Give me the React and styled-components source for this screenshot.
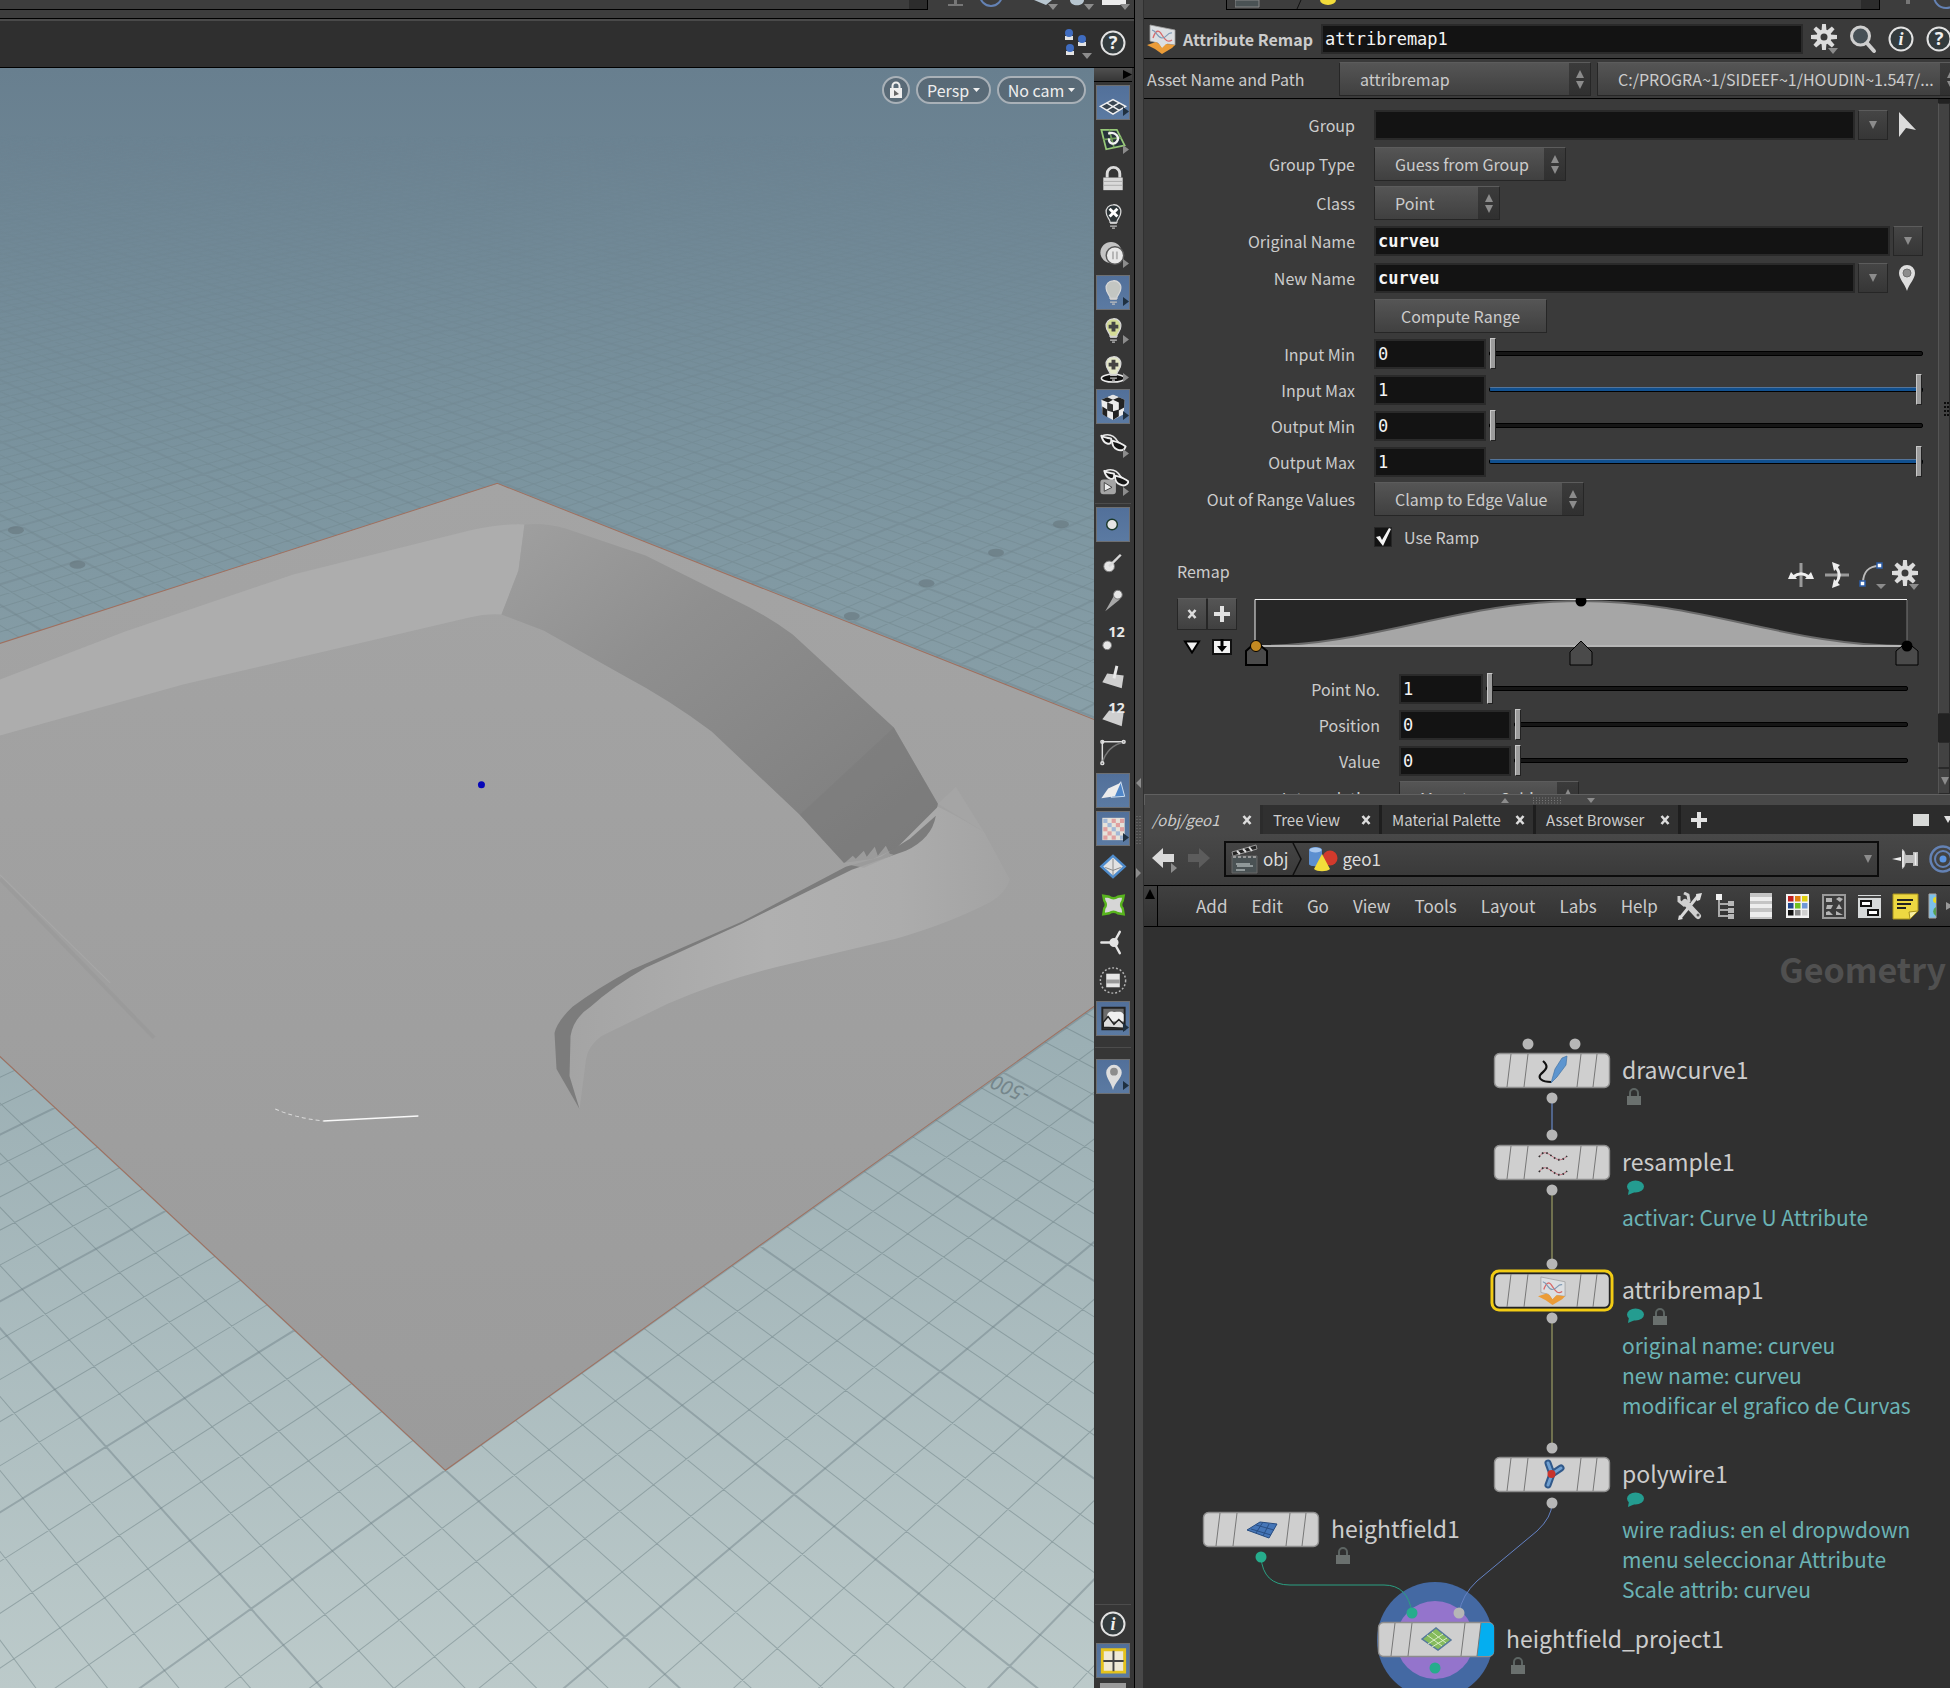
import React from 'react';
import styled, { createGlobalStyle, css } from 'styled-components'

const sans = `"Noto Sans CJK SC", "Noto Sans", sans-serif`;
const mono = `"DejaVu Sans Mono", "Liberation Mono", monospace`;

const GlobalStyle = createGlobalStyle`
  * { box-sizing: border-box; }
  body {
    margin: 0;
    background: #3a3a3a;
    color: #cccccc;
    font-family: ${sans};
    font-size: 16px;
    line-height: 24px;
    overflow: hidden;
  }
  svg { display: block; flex: none; }
  button, input, select { font: inherit; color: inherit; margin: 0; }
`

const raised = css`
  background: linear-gradient(#555555, #404040);
  border: 1px solid #262626;
  border-top-color: #5c5c5c;
`

// ---------- window ----------

const Desktop = styled.div`
  display: grid;
  grid-template-columns: minmax(0, 1134fr) 10px minmax(0, 806fr);
  height: 100vh;
`

const Pane = styled.section`
  display: flex;
  flex-direction: column;
  min-width: 0;
  min-height: 0;
  overflow: hidden;
`

const Strip = styled.div`
  display: flex;
  align-items: flex-start;
  gap: ${props => props.$gap || 0}px;
  flex: none;
  height: 19px;
  padding: 0 0 0 ${props => props.$left || 0}px;
  overflow: hidden;
  background: #3d3d3d;
  border-bottom: 1px solid #000;
`

const StripBox = styled.div`
  display: flex;
  align-items: flex-start;
  gap: 12px;
  flex: 1;
  height: 10px;
  padding-left: 8px;
  overflow: hidden;
  border: 1px solid #000;
  border-top: 0;
  border-left-width: ${props => props.$open ? 0 : 1}px;

  &::after {
    content: '';
    width: 18px;
    height: 9px;
    margin-left: auto;
    background: #2c2c2c;
  }
`

const VSplitter = styled.div`
  display: flex;
  align-items: center;
  justify-content: center;
  background: #484848;
  border-left: 1px solid #000;
  border-right: 1px solid #303030;
`

// ---------- scene view ----------

const SceneBar = styled.div`
  display: flex;
  flex: none;
  align-items: center;
  justify-content: flex-end;
  gap: 8px;
  height: 49px;
  padding: 0 8px 2px 0;
  background: #2f2f2f;
  border-top: 2px solid #4a4a4a;
  border-bottom: 1px solid #000;
`

const SceneBody = styled.div`
  display: flex;
  flex: 1;
  min-height: 0;
`

const Viewport = styled.div`
  position: relative;
  flex: 1;
  min-width: 0;
  overflow: hidden;
`

const Overlay = styled.div`
  position: absolute;
  top: 8px;
  right: 8px;
  display: flex;
  gap: 6px;
`

const Pill = styled.button`
  display: flex;
  align-items: center;
  justify-content: center;
  gap: 4px;
  width: ${props => props.$width}px;
  height: 28px;
  padding: 0;
  color: #eeeeee;
  background: rgba(70, 80, 88, 0.45);
  border: 2px solid #a9b1b8;
  border-radius: 14px;
`

const Tools = styled.nav`
  display: flex;
  flex: none;
  flex-direction: column;
  align-items: center;
  gap: 3px;
  width: 40px;
  padding-right: 2px;
  overflow: hidden;
  background: #363636;
`

const ToolsHandle = styled.div`
  display: flex;
  flex: none;
  justify-content: flex-end;
  align-items: center;
  width: 100%;
  height: 14px;
  background: linear-gradient(#505050, #363636);
  border-bottom: 1px solid #000;
`

const ToolButton = styled.button`
  position: relative;
  flex: none;
  width: 34px;
  height: 35px;
  padding: 0;
  background: ${props => props.$on ? 'linear-gradient(#52709a, #5b7aa2)' : 'none'};
  border: 1px solid ${props => props.$on ? '#6d6f72' : 'transparent'};
`

const Corner = styled.svg`
  position: absolute;
  right: 0;
  bottom: 3px;
`

const ToolRule = styled.hr`
  flex: none;
  width: 36px;
  height: 1px;
  margin: ${props => props.$gap || 0}px 0;
  border: 0;
  background: #4c4c4c;
`

const Spacer = styled.div`
  flex: 1;
`

// ---------- parameters ----------

const Split = styled.div`
  display: grid;
  grid-template-rows: minmax(0, 775fr) minmax(0, 894fr);
  flex: 1;
  min-height: 0;
`

const Header = styled.header`
  display: flex;
  flex: none;
  align-items: center;
  gap: 6px;
  width: calc(100% + ${props => props.$over}px);
  height: 40px;
  padding-left: 3px;
  border-bottom: 1px solid #000;
`

const AssetName = styled.label`
  flex: none;
  width: 186px;
`

const NodeKind = styled.label`
  flex: none;
  width: 132px;
  font-weight: 700;
`

const IconButton = styled.button`
  display: flex;
  flex: none;
  align-items: center;
  justify-content: center;
  width: ${props => props.$width || 32}px;
  height: 32px;
  padding: 0;
  background: none;
  border: 0;
`

const Field = styled.input`
  flex: ${props => props.$width ? 'none' : '1'};
  width: ${props => props.$width ? props.$width + 'px' : 'auto'};
  min-width: 0;
  height: 30px;
  padding: 0 2px;
  color: #f4f4f4;
  background: #131313;
  border: 2px solid #2a2a2a;
  font-family: ${mono};
  font-size: 17px;
  font-weight: ${props => props.$strong ? 700 : 400};
`

const SelectWrap = styled.span`
  position: relative;
  display: flex;
  flex: ${props => props.$width ? 'none' : '1'};
  width: ${props => props.$width ? props.$width + 'px' : 'auto'};
  min-width: 0;
`

const SelectInput = styled.select`
  ${raised}
  width: 100%;
  height: 34px;
  padding: 0 20px 0 20px;
  appearance: none;
  border-radius: 0;
`

const SelectArrows = styled.span`
  position: absolute;
  top: 1px;
  right: 1px;
  bottom: 1px;
  display: flex;
  align-items: center;
  justify-content: center;
  width: 21px;
  background: linear-gradient(#3b3b3b, #303030);
  pointer-events: none;
`

const PushButton = styled.button`
  ${raised}
  width: ${props => props.$width}px;
  height: 34px;
  padding: 0;
`

const DropButton = styled.button`
  ${raised}
  display: flex;
  align-items: center;
  justify-content: center;
  background: linear-gradient(#454545, #363636);
  flex: none;
  width: 30px;
  height: 30px;
  padding: 0;
`

const FormArea = styled.div`
  display: flex;
  flex: 1;
  min-height: 0;
  overflow: hidden;
`

const Form = styled.form`
  display: flex;
  flex: 1;
  flex-direction: column;
  gap: 5px;
  min-width: 0;
  padding: 9px 15px 0 0;
`

const Row = styled.div`
  display: flex;
  flex: none;
  align-items: center;
  gap: 3px;
  height: ${props => props.$height || 31}px;
  padding-right: ${props => props.$right || 0}px;
`

const RowLabel = styled.label`
  flex: none;
  width: ${props => props.$sub ? 236 : 211}px;
  margin-right: 16px;
  text-align: right;
`

const Check = styled.label`
  display: flex;
  align-items: center;
  gap: 12px;
  margin-left: 230px;
`

const CheckBox = styled.input`
  appearance: none;
  width: 18px;
  height: 20px;
  background: #131313;
  border: 1px solid #262626;
`

const CheckMark = styled.svg`
  position: absolute;
`

const Slider = styled.input`
  appearance: none;
  flex: 1;
  min-width: 0;
  height: 31px;
  background: none;

  &::-webkit-slider-runnable-track {
    height: 5px;
    background: ${props => props.$full ? '#11508f' : '#151515'};
    border: 1px solid #000;
    border-top-color: ${props => props.$full ? '#53749a' : '#000'};
    border-radius: 2px;
  }

  &::-webkit-slider-thumb {
    appearance: none;
    width: 6px;
    height: 31px;
    margin-top: -14px;
    background: #9c9c9c;
    border: 1px solid #222;
    border-top-color: #c8c8c8;
    border-left-color: #c8c8c8;
  }
`

const RampHead = styled.div`
  display: flex;
  flex: none;
  align-items: center;
  height: 36px;
  padding-left: 33px;

  h3 {
    flex: 1;
    margin: 0;
    padding-bottom: 8px;
    font-size: 16px;
    font-weight: 400;
  }
`

const RampBody = styled.div`
  display: flex;
  flex: none;
  gap: 8px;
  height: 70px;
  padding: 0 4px 0 33px;
`

const RampKeys = styled.div`
  display: grid;
  flex: none;
  grid-template-columns: 30px 30px;
  grid-template-rows: 32px 34px;

  button {
    display: flex;
    align-items: center;
    justify-content: center;
    padding: 0;
  }
`

const RampKey = styled.button`
  ${raised}
`

const PlainKey = styled.button`
  background: none;
  border: 0;
`

const RampGraph = styled.svg`
  flex: 1;
  min-width: 0;
  height: 70px;
`

const ScrollTrack = styled.div`
  display: flex;
  flex-direction: column;
  flex: none;
  width: 12px;
  padding-top: 4px;
  background: #222;
`

const ScrollThumb = styled.div`
  display: flex;
  flex: ${props => props.$grow || 'none'};
  align-items: center;
  justify-content: flex-end;
  height: 26px;
  margin-bottom: ${props => props.$after || 0}px;
  background: #424242;
  border: 1px solid #2a2a2a;
  border-left-color: #555;
`

// ---------- network ----------

const HSplitter = styled.div`
  display: flex;
  flex: none;
  align-items: center;
  justify-content: center;
  gap: 24px;
  height: 11px;
  background: #484848;
  border: 1px solid #606060;
  border-width: 1px 0 0 1px;
`

const Tabs = styled.div`
  display: flex;
  flex: none;
  height: 29px;
  background: #2c2c2c;
`

const Tab = styled.div`
  display: flex;
  align-items: center;
  justify-content: space-between;
  width: ${props => props.$width}px;
  padding: 0 8px 0 ${props => props.$on ? 8 : 10}px;
  background: ${props => props.$on ? '#484848' : '#303030'};
  border-right: 3px solid ${props => props.$on ? '#2c2c2c' : '#1e1e1e'};
  font-size: 15px;
  font-style: ${props => props.$on ? 'italic' : 'normal'};

  button {
    padding: 0;
    background: none;
    border: 0;
  }
`

const TabEnd = styled.div`
  display: flex;
  flex: 1;
  align-items: center;
  justify-content: space-between;
  padding-left: 9px;
`

const PathRow = styled.div`
  display: flex;
  flex: none;
  align-items: center;
  width: calc(100% + 12px);
  height: 52px;
  padding: 0 0 2px 2px;
  background: linear-gradient(#484848, #3c3c3c);
  border-bottom: 1px solid #000;
`

const PathBox = styled.div`
  display: flex;
  flex: 1;
  align-items: center;
  gap: 3px;
  height: 36px;
  margin: 0 9px 0 10px;
  padding-left: 5px;
  background: linear-gradient(#444, #3a3a3a);
  border: 2px solid #0c0c0c;
  font-size: 17px;

  a {
    display: flex;
    align-items: center;
    gap: 4px;
    color: #dcdcdc;
    text-decoration: none;
  }
`

const MenuBar = styled.div`
  display: flex;
  flex: none;
  align-items: center;
  height: 41px;
  background: linear-gradient(#404040, #323232);
  border-bottom: 1px solid #000;
  overflow: hidden;
`

const MenuGrip = styled.div`
  flex: none;
  align-self: stretch;
  width: 14px;
  padding-top: 3px;
  border-right: 1px solid #000;
`

const Menu = styled.div`
  display: flex;
  flex: none;
  gap: 24px;
  margin: 0 18px 0 38px;
  font-size: 17px;

  button {
    padding: 0;
    background: none;
    border: 0;
  }
`

const MenuIcons = styled.div`
  display: flex;
  gap: 8px;

  button {
    padding: 0;
    background: none;
    border: 0;
  }
`

const Canvas = styled.div`
  position: relative;
  flex: 1;
  min-height: 0;
  overflow: hidden;
  background: #303030;
`

const Wires = styled.svg`
  position: absolute;
  top: 0;
  left: 0;
`

const Watermark = styled.div`
  position: absolute;
  top: 20px;
  right: 4px;
  color: #505050;
  font-size: 34px;
  font-weight: 700;
  line-height: 44px;
`

const NodeBox = styled.div`
  position: absolute;
  top: ${props => props.$y}px;
  left: ${props => props.$x}px;
  display: flex;
  gap: 12px;
`

const NodeTile = styled.svg`
  overflow: visible;
`

const NodeText = styled.div`
  color: #cccccc;
  font-size: 23px;
  line-height: 32px;
  white-space: nowrap;
`

const Badges = styled.div`
  display: flex;
  gap: 8px;
  height: 25px;
  padding: 3px 0 0 4px;
`

const Note = styled.p`
  margin: 0;
  color: #6bb3b5;
  font-size: 21px;
  line-height: 30px;
  white-space: pre-line;
`

// ---------- small glyphs ----------

const Down = ({ size = 8, fill = '#8c8c8c' }) => (
  <svg width={size} height={size} viewBox="0 0 8 8"><path d="M0 0h8L4 8z" fill={fill} /></svg>
)

const Caret = () => (
  <svg width="7" height="4" viewBox="0 0 7 4"><path d="M0 0h7L3.500 4z" fill="#f0f0f0" /></svg>
)

const Updown = () => (
  <svg width="8" height="20" viewBox="0 0 8 20" fill="#8c8c8c"><path d="M4 1l4 8H0zM0 12h8l-4 8z" /></svg>
)

const Cross = () => (
  <svg width="10" height="12" viewBox="0 0 10 12"><path d="M1.500 2l7 8M8.500 2l-7 8" stroke="#dcdcdc" strokeWidth="2.600" /></svg>
)

const Plus = () => (
  <svg width="18" height="18" viewBox="0 0 18 18"><path d="M9 1v16M1 9h16" stroke="#e2e2e2" strokeWidth="4" /></svg>
)

const teeth = [0, 45, 90, 135, 180, 225, 270, 315];

const Gear = () => (
  <svg width="30" height="32" viewBox="0 0 30 32">
    <g fill="#dcdcdc">
      {teeth.map(a => <path key={a} d="M11.500 8l.6-7h3.800l.6 7z" transform={`rotate(${a} 14 14)`} />)}
    </g>
    <circle cx="14" cy="14" r="5.500" fill="none" stroke="#dcdcdc" strokeWidth="4" />
    <path d="M18 25h10l-5 6z" fill="#8c8c8c" />
  </svg>
)

const Search = () => (
  <svg width="30" height="30" viewBox="0 0 30 30">
    <path d="M18 18l8 9" stroke="#cfcfcf" strokeWidth="4" strokeLinecap="round" />
    <circle cx="12.500" cy="12" r="9" fill="#465056" stroke="#cfcfcf" strokeWidth="3" />
  </svg>
)

const Ring = ({ children, serif }) => (
  <svg width="28" height="28" viewBox="0 0 28 28">
    <circle cx="14" cy="14" r="11.500" fill="#333b3d" stroke="#e2e2e2" strokeWidth="2" />
    <text x="14" y="20" textAnchor="middle" fill="#f0f0f0" fontSize="18" fontWeight="700"
      fontStyle={serif ? 'italic' : 'normal'}
      fontFamily={serif ? '"Liberation Serif", serif' : '"Noto Sans", sans-serif'}>{children}</text>
  </svg>
)

const Target = () => (
  <svg width="28" height="28" viewBox="0 0 28 28" fill="none" stroke="#6482b4">
    <circle cx="14" cy="14" r="12.500" strokeWidth="2.500" />
    <circle cx="14" cy="14" r="8" strokeWidth="2" />
    <circle cx="14" cy="14" r="3.500" fill="#5b94e0" stroke="none" />
  </svg>
)

const Pin = () => (
  <svg width="30" height="22" viewBox="0 0 30 22">
    <path d="M1 11l9-2v4z" fill="#f0f0f0" />
    <path d="M11 1c4 2 3 6 4 6h7V4h5v14h-5v-3h-7c-1 0 0 4-4 6z" fill="#bdbdbd" />
    <path d="M12 3v16M24.500 5v12" stroke="#eee" strokeWidth="1.500" />
  </svg>
)

const Marker = () => (
  <svg width="20" height="28" viewBox="0 0 20 28">
    <path d="M10 27C8 20 2 15 2 9a8 8 0 0 1 16 0c0 6-6 11-8 18z" fill="#dedede" />
    <circle cx="10" cy="9" r="4" fill="#8d8d8d" stroke="#707070" />
  </svg>
)

const Pointer = () => (
  <svg width="20" height="28" viewBox="0 0 20 28"><path d="M2 1l17 18-10-2-7 9z" fill="#dcdcdc" /></svg>
)

const RemapIcon = ({ size = 30 }) => (
  <svg width={size} height={size} viewBox="0 0 30 30">
    <path d="M3 1l25 5v15l-8-1-5 5-4-6-8-2z" fill="#dcdfe2" stroke="#a0a0a0" strokeWidth="0.800" />
    <path d="M6 14c3-9 6-8 9-3s6 8 10 5" fill="none" stroke="#d86a6a" strokeWidth="1.300" />
    <path d="M5 6c5 1 5 8 10 8s5-6 10-5" fill="none" stroke="#7f9ab4" strokeWidth="1.100" />
    <path d="M0 21l9-3 3 2 3 4 4-4 9 1-3 3-10 6-7-5z" fill="#eb9c38" />
  </svg>
)

const Clapper = () => (
  <svg width="28" height="30" viewBox="0 0 28 30">
    <path d="M1 8l24-7 1 4L2 12z" fill="#222" stroke="#999" />
    <path d="M6 7l3 3M12 5l3 3M18 3l3 4" stroke="#ddd" strokeWidth="2" />
    <path d="M1 12h25v17H1z" fill="#4a5254" stroke="#666" />
    <path d="M2 13h24" stroke="#999" strokeDasharray="3 2" strokeWidth="2" />
    <path d="M5 20h14M6 22h16M5 26h9" stroke="#a8b0b0" strokeWidth="1.300" />
  </svg>
)

const GeoIcon = () => (
  <svg width="30" height="26" viewBox="0 0 30 26">
    <path d="M1 4c0-4 13-4 13 0v14c0 3-13 3-13 0z" fill="#5c8fd0" />
    <ellipse cx="7.500" cy="4" rx="6" ry="2.500" fill="#a9c8ee" />
    <circle cx="22" cy="12" r="7.500" fill="#d23a2c" />
    <path d="M14 8l8 15c-3 3-13 3-16 0z" fill="#f2dc3a" />
  </svg>
)

const Arrow = ({ dim, flip }) => (
  <svg width="28" height="28" viewBox="0 0 28 28">
    <g transform={flip ? 'translate(28 0) scale(-1 1)' : undefined}>
      <path d="M2 13L13 3v6h11v8H13v6z" fill={dim ? '#5c5c5c' : '#dadada'} />
    </g>
    {!dim && <path d="M21 18l6 5-6 5z" fill="#8c8c8c" />}
  </svg>
)

const Lock = () => (
  <svg width="16" height="18" viewBox="0 0 16 18">
    <path d="M4 9V5a4 4 0 0 1 8 0v4" fill="none" stroke="#5d6563" strokeWidth="2" />
    <path d="M1 8h14v9H1z" fill="#6a706e" />
  </svg>
)

const Comment = () => (
  <svg width="18" height="16" viewBox="0 0 18 16">
    <ellipse cx="9.500" cy="6.500" rx="8.500" ry="6" fill="#249c90" />
    <path d="M3 9l-1 6 7-3z" fill="#249c90" />
  </svg>
)

// ---------- viewport tool column ----------

const bulb = (fill, inner) => (
  <>
    <path d="M16 5a7 7 0 0 1 8 8c0 5-4 6-4 10h-7c0-4-4-5-4-10a7 7 0 0 1 7-8z" fill={fill} stroke="#d8d8d8" strokeWidth="1.300" />
    <path d="M13 24h7M13 27h7M15 29h3" stroke="#c0c0c0" strokeWidth="1.300" />
    {inner}
  </>
)

const shades = (
  <g strokeLinejoin="round">
    <path d="M5 8c8-3 13 1 16 6l8 6" fill="none" stroke="#e8e8e8" strokeWidth="1.600" />
    <path d="M4 8c3 2 6 2 10 3 1 4-1 6-4 5-4-1-5-4-6-8z" fill="#151515" stroke="#eee" strokeWidth="2" />
    <path d="M15 13c4 1 9 2 14 6-1 4-5 5-9 3-3-1-5-5-5-9z" fill="#151515" stroke="#eee" strokeWidth="2" />
  </g>
)

const ball = (x, y, r) => <circle cx={x} cy={y} r={r} fill="#e6e6e6" stroke="#777" strokeWidth="1" />

const number = (
  <text x="11" y="15" fill="#e8e8e8" fontSize="15" fontWeight="700" fontFamily='"Noto Sans", sans-serif'>12</text>
)

const checks = [0, 1, 2, 3, 4].flatMap(r => [0, 1, 2, 3, 4].map(c => [r, c]));

const toolsTop = [
  { name: 'Reference plane', on: true, more: true, art: (
    <g fill="#3a4651" stroke="#f0f0f0" strokeWidth="1.500"><path d="M3 21l13-7 13 7-13 8z" /><path d="M9.500 25l13-7.500M9.500 17.500l13 7.500" /></g>
  ) },
  { name: 'Construction plane', more: true, art: (
    <g fill="none" strokeWidth="1.800"><path d="M4 6h16l8 16-19 4z" stroke="#97c978" fill="#26313a" /><path d="M6 16l19-2M12 6l5 18" stroke="#6f9c58" /><path d="M11 10c8-3 12 4 9 8s-9 2-8-3" stroke="#f2f2f2" strokeWidth="2.400" /></g>
  ) },
  { name: 'Lock camera', art: (
    <g><path d="M10 16v-4a6.500 6.500 0 0 1 13 0v4" fill="none" stroke="#dcdcdc" strokeWidth="3" /><path d="M6 16h20v13H6z" fill="#dadada" /><path d="M6 20h20M6 24h20" stroke="#aaa" /></g>
  ) },
  { name: 'No lighting', art: bulb('#2d3538', <path d="M12.500 9l8 8M20.500 9l-8 8" stroke="#fff" strokeWidth="3" />) },
  { name: 'Headlight', more: true, art: (
    <g><circle cx="14" cy="15" r="11" fill="#c4c4c4" /><circle cx="18" cy="18" r="9" fill="#e8e8e8" stroke="#555" strokeWidth="1.500" /><path d="M16 14v8M20 14v8" stroke="#b4b4b4" strokeWidth="2" /></g>
  ) },
  { name: 'Normal lighting', on: true, more: true, art: bulb('#c3c6c2') },
  { name: 'High quality lighting', more: true, art: bulb('#d4dc96', <path d="M16.500 8v10M11.500 13h10" stroke="#444" strokeWidth="4" />) },
  { name: 'Lighting and shadows', more: true, art: (
    <g><ellipse cx="16" cy="27" rx="12" ry="4" fill="#111" stroke="#eee" strokeWidth="1.500" />{bulb('#e4e8c8', <path d="M16.500 8v10M11.500 13h10" stroke="#444" strokeWidth="4" />)}</g>
  ) },
  { name: 'Materials', on: true, more: true, art: (
    <g>
      <path d="M4 10l12-5 12 5-1 15-11 6-11-6z" fill="#ececec" />
      <path d="M10 7.500l6-2.500 6 2.500-6 2.500z" fill="#e4e4e4" />
      <path d="M4 10l6-2.500 6 2.500-5 3zM16 10l6-2.500 6 2.500-6 3zM22 13l6-3-.5 8-5.500 3zM16 22l6-2v7l-6 4zM5 17l5 3v8l-5-3z" fill="#222" />
      <path d="M10 13l6 2v8l-6-2z" fill="#333" />
    </g>
  ) },
  { name: 'Display options', more: true, art: shades },
  { name: 'Render flipbook', more: true, art: (
    <g><rect x="3" y="14" width="16" height="15" rx="3" fill="#a5a5a5" /><path d="M7 17l8 5-8 4z" fill="#eee" stroke="#444" /><g transform="translate(3 -3)">{shades}</g></g>
  ) },
]

const toolsMid = [
  { name: 'Points', on: true, art: <circle cx="15" cy="17" r="5.500" fill="#e6e6e6" stroke="#1c3a2c" strokeWidth="1.500" /> },
  { name: 'Point normals', art: <g>{ball(12, 21, 5.5)}<path d="M12 21L24 9" stroke="#d8d8d8" strokeWidth="2.500" /></g> },
  { name: 'Point trails', art: <g><path d="M8 28l9-16 6 4z" fill="#a8a8a8" />{ball(21, 11, 4.5)}</g> },
  { name: 'Point numbers', art: <g>{number}{ball(10, 24, 4.5)}</g> },
  { name: 'Primitive normals', art: <g><path d="M5 23l5-9 17 2-2 13z" fill="#cfcfcf" /><path d="M17 19l3-13" stroke="#e8e8e8" strokeWidth="3" /></g> },
  { name: 'Primitive numbers', art: <g><path d="M5 22l7-9 15 2-2 14z" fill="#cfcfcf" />{number}</g> },
  { name: 'Hulls', art: <g fill="none" stroke="#dcdcdc" strokeWidth="1.500"><path d="M5 28V6h23" /><path d="M5 28C8 17 15 9 28 6" stroke="#777" /><circle cx="5" cy="6" r="1.500" /><circle cx="5" cy="28" r="1.500" /><circle cx="27" cy="6" r="1.500" /></g> },
  { name: 'Shaded faces', on: true, art: <g><path d="M14 24l10-16 4 15z" fill="#4f86c8" stroke="#cfe0f2" /><path d="M4 25l7-10 13-6-6 14z" fill="#ececec" /></g> },
  { name: 'UV texture', on: true, more: true, art: (
    <g><path d="M5 6h23v23H5z" fill="#e6e2da" />{checks.map(([r, c]) => (r + c) % 2 === 0 &&
      <rect key={`${r}${c}`} x={6 + c * 4.3} y={7 + r * 4.3} width="4.300" height="4.300" fill={(r * 2 + c) % 3 ? '#e0a0a0' : '#a3b8d6'} />)}</g>
  ) },
  { name: 'Vertex markers', art: <g><path d="M4 17L16 6l12 11-12 11z" fill="#e2e2e2" stroke="#4f8ccc" strokeWidth="2.500" /><path d="M8 18l8 3 8-3M16 9v17" fill="none" stroke="#888" /></g> },
  { name: 'Profile curves', art: <path d="M6 8l6 1c3 2 6 2 9 0l6-1-1 5c-2 3-2 6 0 8l1 6-6-1c-3-2-6-2-9 0l-6 1 1-6c2-2 2-5 0-8z" fill="#d6d6d6" stroke="#58b41e" strokeWidth="2.500" /> },
  { name: 'Breakpoints', art: <g stroke="#e4e4e4" strokeWidth="2.500" strokeLinecap="round"><path d="M17 17L23 6M17 17l6 11M17 17H4" /><circle cx="17" cy="17" r="3.500" fill="#e4e4e4" /></g> },
  { name: 'Group list', art: <g><circle cx="16" cy="17" r="13" fill="none" stroke="#b4b4b4" strokeDasharray="2 2" strokeWidth="1.500" /><path d="M9 10h14v14H9z" fill="#e6e6e6" /><path d="M9 16h14v4H9z" fill="#999" /></g> },
  { name: 'Background image', on: true, more: true, art: <g><path d="M5 6h23v22H5z" fill="#6c6c6c" stroke="#222" strokeWidth="2" /><path d="M10 14c0-3 3-5 6-4s9-2 11 3v7H14z" fill="#f0f0f0" /><path d="M6 26v-5l5-6 6 8 5-5 5 5v4z" fill="#ddd" stroke="#222" strokeWidth="1.500" /></g> },
]

const toolsLow = [
  { name: 'Markers', on: true, more: true, art: <g><path d="M16 31C14 23 9 19 9 13a8 8 0 0 1 16 0c0 6-7 10-9 18z" fill="#dedede" /><circle cx="17" cy="12" r="4" fill="#8d8d8d" /></g> },
]

function Tool({ tool }) {
  return (
    <ToolButton type="button" aria-label={tool.name} $on={tool.on}>
      <svg width="32" height="33" viewBox="0 0 32 34">{tool.art}</svg>
      {tool.more && (
        <Corner width="6" height="9" viewBox="0 0 6 9"><path d="M0 0l6 4.500L0 9z" fill={tool.on ? '#1f3040' : '#8c8c8c'} /></Corner>
      )}
    </ToolButton>
  )
}

// ---------- viewport scene ----------

// ground plane point for grid coordinates (u, v), one unit is one side of the slab
function groundPoint(u, v) {
  const w = 1 + u * 0.583 + v * 0.692;
  const x = 445 + u * 0.583 * 2915 - v * 0.692 * 1447;
  const y = 1469 - u * 0.583 * 292 - v * 0.692 * 290;
  return [x / w, y / w];
}

const at = (u, v) => groundPoint(u, v).map(n => n.toFixed(1)).join(' ');

function gridPath(bold) {
  const parts = [];
  for (let i = -60; i < 280; i++) {
    if ((i % 5 === 0) !== bold) continue;
    const t = i / 40;
    const startU = (-0.75 - t * 0.692) / 0.583;
    const startV = (-0.75 - t * 0.583) / 0.692;
    parts.push(`M${at(startU, t)}L${at(12, t)}`);
    parts.push(`M${at(t, startV)}L${at(t, 12)}`);
  }
  return parts.join('');
}

const thinGrid = gridPath(false);
const boldGrid = gridPath(true);

// ruler ticks that run away from the slab along both axes
const ticks = [
  [1.01, 0.509], [1.135, 0.509], [1.26, 0.509], [1.385, 0.509], [0.49, 1.117], [0.49, 1.242],
].map(([u, v]) => groundPoint(u, v));

function Scene() {
  return (
    <svg width="100%" height="100%" viewBox="0 68 1093 1620" preserveAspectRatio="xMidYMin slice" role="img" aria-label="Scene">
      <defs>
        <linearGradient id="sky" x1="0" y1="0" x2="0" y2="1">
          <stop offset="0" stopColor="#687f8f" />
          <stop offset="0.25" stopColor="#7b949f" />
          <stop offset="0.6" stopColor="#9bafb4" />
          <stop offset="1" stopColor="#bccaca" />
        </linearGradient>
        <linearGradient id="fade" x1="0" y1="0" x2="0" y2="1">
          <stop offset="0.040" stopColor="#000" />
          <stop offset="0.200" stopColor="#666" />
          <stop offset="0.500" stopColor="#fff" />
        </linearGradient>
        <linearGradient id="wall" x1="0" y1="0" x2="1" y2="1">
          <stop offset="0" stopColor="#a0a0a0" />
          <stop offset="0.350" stopColor="#8f8f8f" />
          <stop offset="1" stopColor="#7b7b7b" />
        </linearGradient>
        <linearGradient id="bank" x1="0" y1="0" x2="1" y2="0">
          <stop offset="0" stopColor="#a4a4a4" />
          <stop offset="0.450" stopColor="#b0b0b0" />
          <stop offset="0.750" stopColor="#acacac" />
          <stop offset="1" stopColor="#a3a3a3" />
        </linearGradient>
        <linearGradient id="slab" x1="0" y1="0" x2="0" y2="1">
          <stop offset="0" stopColor="#a4a4a4" />
          <stop offset="1" stopColor="#9b9b9b" />
        </linearGradient>
        <mask id="haze" maskUnits="userSpaceOnUse" x="0" y="68" width="1093" height="1620">
          <rect y="68" width="1093" height="1620" fill="url(#fade)" />
        </mask>
      </defs>
      <rect y="68" width="1093" height="1620" fill="url(#sky)" />
      <g mask="url(#haze)" fill="none" stroke="#66797f">
        <path d={thinGrid} strokeWidth="1" opacity="0.450" />
        <path d={boldGrid} strokeWidth="2" opacity="0.400" />
      </g>
      <g fill="#66767d" opacity="0.600">
        {ticks.map(([x, y]) => <ellipse key={x} cx={x} cy={y} rx="8" ry="4" />)}
      </g>
      <text transform="translate(1030 1090) rotate(205)" fill="#75868b" fontSize="20" fontStyle="italic" fontFamily="Noto Sans, sans-serif">-500</text>
      <path d="M497 483L1351 821 445 1469-330 749z" fill="url(#slab)" stroke="#a0705f" strokeWidth="1" />
      <path d="M0 679L125 631 293 574 469 530Q500 523 524 524L518 570 501 614Q485 613 469 617L183 684 0 735z" fill="#adadad" />
      <path d="M524 524Q545 522 565 528L645 555 733 599Q765 614 792 634L893 727 937 803 933 821 909 841 873 858 843 862 799 814 711 731Q670 700 623 675L543 630 501 614 518 570z" fill="url(#wall)" />
      <path d="M893 727L937 803 933 821 909 841 873 858 843 862 799 814z" fill="#777" opacity="0.350" />
      <path d="M937 806Q950 812 983 831L1009 879Q1004 893 990 901 950 922 895 938L777 966Q720 980 667 1003L601 1035Q586 1046 585 1062L579 1108 567 1075 568 1035Q573 1017 587 1008 612 984 645 965L741 923 851 868 895 848z" fill="url(#bank)" />
      <path d="M937 803L955 786 983 831z" fill="#a5a5a5" />
      <path d="M935 815Q931 838 905 850L851 869 741 923 645 967Q612 986 590 1006 573 1017 570 1035L569 1075 579 1108 556 1068 554 1032Q557 1020 572 1006 596 988 631 969L741 921 845 866 880 856 909 838z" fill="#7c7c7c" />
      <path d="M843 863l9-8 3 3 8-8 3 6 8-10 3 9 8-10 4 8 4 1-30 13z" fill="#a2a2a2" opacity="0.800" />
      <path d="M0 878L154 1037" stroke="#939393" strokeWidth="4" opacity="0.350" />
      <path d="M0 874L110 982" stroke="#b0b0b0" opacity="0.500" />
      <path d="M275 1108Q295 1117 323 1120" fill="none" stroke="#f4f4f4" strokeDasharray="4 3" opacity="0.700" />
      <path d="M323 1120L418 1115" stroke="#f8f8f8" strokeWidth="1.400" />
      <circle cx="481" cy="784" r="3.500" fill="#0606b8" />
    </svg>
  )
}

function SceneView() {
  return (
    <Pane>
      <Strip $gap={16}>
        <StripBox $open />
        <svg width="190" height="10" viewBox="0 0 190 10">
          <path d="M10 0h3v4h6v2H4V4h6z" fill="#777" />
          <circle cx="47" cy="-5" r="11" fill="none" stroke="#6482b4" strokeWidth="2" />
          <path d="M90 0l12 5 6-5zM126 0c0 7 14 7 14 0z" fill="#b8c6d0" />
          <path d="M158 0h24v5h-24z" fill="#ececec" />
          <path d="M104 4h10l-5 6zM140 4h10l-5 6zM176 4h10l-5 6z" fill="#8c8c8c" />
        </svg>
      </Strip>
      <SceneBar>
        <IconButton type="button" aria-label="Options" $width={30}>
          <svg width="30" height="32" viewBox="0 0 30 32">
            {[[7, 6], [20, 12], [8, 21]].map(([x, y]) => (
              <g key={x}><path d={`M${x - 4} ${y + 3}h8v4h-8z`} fill="#e4e4e4" /><circle cx={x} cy={y} r="4" fill="#3f6cc0" /></g>
            ))}
            <path d="M20 26h10l-5 6z" fill="#8c8c8c" />
          </svg>
        </IconButton>
        <IconButton type="button" aria-label="Help" $width={26}><Ring>?</Ring></IconButton>
      </SceneBar>
      <SceneBody>
        <Viewport>
          <Scene />
          <Overlay>
            <Pill type="button" aria-label="Lock" $width={28}>
              <svg width="14" height="18" viewBox="0 0 14 18"><path d="M3.500 8V5a3.500 3.500 0 0 1 7 0v3" fill="none" stroke="#eee" strokeWidth="2" /><path d="M1 7h12v10H1z" fill="#eee" /><path d="M5 9l5 4-5 2z" fill="#666" /></svg>
            </Pill>
            <Pill type="button" $width={75}>Persp <Caret /></Pill>
            <Pill type="button" $width={89}>No cam <Caret /></Pill>
          </Overlay>
        </Viewport>
        <Tools>
          <ToolsHandle><svg width="9" height="9" viewBox="0 0 9 9"><path d="M0 0l9 4.500L0 9z" /></svg></ToolsHandle>
          {toolsTop.map(tool => <Tool key={tool.name} tool={tool} />)}
          <ToolRule />
          {toolsMid.map(tool => <Tool key={tool.name} tool={tool} />)}
          <ToolRule $gap={8} />
          {toolsLow.map(tool => <Tool key={tool.name} tool={tool} />)}
          <Spacer />
          <ToolRule />
          <IconButton type="button" aria-label="Info" $width={34}><Ring serif>i</Ring></IconButton>
          <Tool tool={{ name: 'Layout', on: true, art: <g><path d="M5 6h23v23H5z" fill="#efe9d6" stroke="#e4c21c" strokeWidth="3" /><path d="M16.500 7v21M6 17.500h21" stroke="#444" strokeWidth="2" /></g> }} />
          <svg width="26" height="7"><rect width="26" height="7" y="2" fill="#9a9a9a" /></svg>
        </Tools>
      </SceneBody>
    </Pane>
  )
}

// ---------- parameter form ----------

function Select({ id, label, value, width }) {
  return (
    <SelectWrap $width={width}>
      <SelectInput id={id} aria-label={label} defaultValue={value}>
        <option>{value}</option>
      </SelectInput>
      <SelectArrows><Updown /></SelectArrows>
    </SelectWrap>
  )
}

function SliderRow({ id, label, value, full, sub, width = 112, right }) {
  return (
    <Row $right={right}>
      <RowLabel htmlFor={id} $sub={sub}>{label}</RowLabel>
      <Field id={id} $width={width} defaultValue={value} />
      <Slider type="range" aria-label={`${label} slider`} min="0" max="1" step="any" defaultValue={full ? 1 : 0} $full={full} />
    </Row>
  )
}

function Ramp() {
  return (
    <RampGraph viewBox="0 0 674 70" preserveAspectRatio="none" role="img" aria-label="Remap ramp">
      <path d="M10 2h652v46H10z" fill="#262626" />
      <path d="M10 48C130 48 215 3 336 3S542 48 662 48z" fill="#a6a6a6" stroke="#6a6a6a" strokeWidth="2" />
      <path d="M10 48h652" stroke="#b5b5b5" strokeWidth="2" />
      <path d="M10 48V1.500h652" fill="none" stroke="#f0f0f0" />
      <path d="M662 2v46" stroke="#777" />
      <g fill="#4a4a4a" stroke="#000">
        <path d="M1 67V53l10-9 11 9v14z" strokeWidth="2" />
        <path d="M325 67V54l11-11 11 11v13z" />
        <path d="M651 67V53l11-9 11 9v14z" />
      </g>
      <circle cx="11" cy="48" r="5.500" fill="#c48a22" stroke="#000" />
      <circle cx="336" cy="3" r="5.500" />
      <circle cx="662" cy="48" r="5.500" />
    </RampGraph>
  )
}

function Parameters() {
  return (
    <Pane>
      <Header $over={5}>
        <RemapIcon />
        <NodeKind htmlFor="name">Attribute Remap</NodeKind>
        <Field id="name" defaultValue="attribremap1" />
        <IconButton type="button" aria-label="Actions"><Gear /></IconButton>
        <IconButton type="button" aria-label="Find"><Search /></IconButton>
        <IconButton type="button" aria-label="Info"><Ring serif>i</Ring></IconButton>
        <IconButton type="button" aria-label="Help"><Ring>?</Ring></IconButton>
      </Header>
      <Header $over={12}>
        <AssetName htmlFor="asset">Asset Name and Path</AssetName>
        <Select id="asset" value="attribremap" width={252} />
        <Select label="Asset path" value="C:/PROGRA~1/SIDEEF~1/HOUDIN~1.547/..." />
      </Header>
      <FormArea>
        <Form>
          <Row $height={34}>
            <RowLabel htmlFor="group">Group</RowLabel>
            <Field id="group" />
            <DropButton type="button" aria-label="Group list"><Down /></DropButton>
            <IconButton type="button" aria-label="Select group"><Pointer /></IconButton>
          </Row>
          <Row $height={34}>
            <RowLabel htmlFor="type">Group Type</RowLabel>
            <Select id="type" value="Guess from Group" width={192} />
          </Row>
          <Row $height={34}>
            <RowLabel htmlFor="class">Class</RowLabel>
            <Select id="class" value="Point" width={126} />
          </Row>
          <Row $height={32}>
            <RowLabel htmlFor="original">Original Name</RowLabel>
            <Field id="original" defaultValue="curveu" $strong />
            <DropButton type="button" aria-label="Original name list"><Down /></DropButton>
          </Row>
          <Row $height={32}>
            <RowLabel htmlFor="new">New Name</RowLabel>
            <Field id="new" defaultValue="curveu" $strong />
            <DropButton type="button" aria-label="New name list"><Down /></DropButton>
            <IconButton type="button" aria-label="Visualize"><Marker /></IconButton>
          </Row>
          <Row $height={34}>
            <RowLabel as="span" />
            <PushButton type="button" $width={173}>Compute Range</PushButton>
          </Row>
          <SliderRow id="imin" label="Input Min" value="0" />
          <SliderRow id="imax" label="Input Max" value="1" full />
          <SliderRow id="omin" label="Output Min" value="0" />
          <SliderRow id="omax" label="Output Max" value="1" full />
          <Row $height={34}>
            <RowLabel htmlFor="range">Out of Range Values</RowLabel>
            <Select id="range" value="Clamp to Edge Value" width={210} />
          </Row>
          <Row>
            <Check>
              <CheckBox type="checkbox" defaultChecked />
              <CheckMark width="18" height="22" viewBox="0 0 18 22"><path d="M2 11l4-1 2 4 7-12 2 1-8 17z" fill="#f4f4f4" /></CheckMark>
              Use Ramp
            </Check>
          </Row>
          <RampHead>
            <h3>Remap</h3>
            <IconButton type="button" aria-label="Flip horizontal" $width={36}>
              <svg width="26" height="26" viewBox="0 0 26 26"><path d="M13 1v24" stroke="#9a9a9a" strokeWidth="3" /><path d="M5 15c5-4 11-4 16 0" fill="none" stroke="#eee" strokeWidth="3" /><path d="M0 17l3-7 6 7zM26 17l-3-7-6 7z" fill="#eee" /></svg>
            </IconButton>
            <IconButton type="button" aria-label="Flip vertical" $width={36}>
              <svg width="26" height="26" viewBox="0 0 26 26"><path d="M1 13h24" stroke="#9a9a9a" strokeWidth="3" /><path d="M12 5c4 5 4 11 0 16" fill="none" stroke="#eee" strokeWidth="3" /><path d="M8 0l8 3-6 6zM8 26l8-3-6-6z" fill="#eee" /></svg>
            </IconButton>
            <IconButton type="button" aria-label="Presets" $width={34}>
              <svg width="28" height="28" viewBox="0 0 28 28"><path d="M5 22C5 11 11 5 21 5" fill="none" stroke="#bbb" strokeWidth="2" /><path d="M2 20h5v5H2zM19 2h5v5h-5z" fill="#fff" stroke="#2c5ea8" strokeWidth="1.500" /><path d="M18 23h10l-5 5z" fill="#8c8c8c" /></svg>
            </IconButton>
            <IconButton type="button" aria-label="Ramp actions" $width={34}><Gear /></IconButton>
          </RampHead>
          <RampBody>
            <RampKeys>
              <RampKey type="button" aria-label="Delete point"><Cross /></RampKey>
              <RampKey type="button" aria-label="Add point"><Plus /></RampKey>
              <PlainKey type="button" aria-label="Show controls"><svg width="18" height="14" viewBox="0 0 18 14"><path d="M2 1.500h14l-7 11z" fill="#f2f2f2" stroke="#000" strokeWidth="2" /></svg></PlainKey>
              <PlainKey type="button" aria-label="Expand"><svg width="20" height="18" viewBox="0 0 20 18"><path d="M1 2h18v14H1z" fill="#f2f2f2" stroke="#111" strokeWidth="2" /><path d="M8.500 1h3v7h3.500l-5 6-5-6h3.500z" /></svg></PlainKey>
            </RampKeys>
            <Ramp />
          </RampBody>
          <SliderRow id="point" label="Point No." value="1" sub width={84} right={15} />
          <SliderRow id="pos" label="Position" value="0" sub right={15} />
          <SliderRow id="val" label="Value" value="0" sub right={15} />
          <Row $height={34}>
            <RowLabel htmlFor="interp" $sub>Interpolation</RowLabel>
            <Select id="interp" value="Monotone Cubic" width={180} />
          </Row>
        </Form>
        <ScrollTrack>
          <ScrollThumb $grow={1} $after={28}>
            <svg width="5" height="14" viewBox="0 0 5 14"><path d="M1 0v14M4 0v14" stroke="#0c0c0c" strokeWidth="2" strokeDasharray="2 2" /></svg>
          </ScrollThumb>
          <ScrollThumb />
          <ScrollThumb><Down /></ScrollThumb>
        </ScrollTrack>
      </FormArea>
    </Pane>
  )
}

// ---------- network editor ----------

const tileArt = {
  pen: (
    <g><path d="M49 8c7 6 2 9-2 13s1 8 10 8" fill="none" stroke="#111" strokeWidth="2.200" /><path d="M57 30l4-14 7-11 5-2-1 9-9 12z" fill="#5d95cf" stroke="#386a9c" strokeWidth="0.600" /></g>
  ),
  waves: (
    <g fill="none"><path d="M45 12c9-14 16 12 28-1M45 27c9-14 16 12 28-1" stroke="#c87484" strokeWidth="1" /><path d="M45 12c9-14 16 12 28-1M45 27c9-14 16 12 28-1" stroke="#333" strokeDasharray="1.500 3" strokeWidth="1.800" /></g>
  ),
  remap: <g transform="translate(44 3)"><RemapIcon size={29} /></g>,
  joint: (
    <g strokeLinecap="round"><path d="M54 6l4 11M67 11l-9 6M58 17l-4 11" stroke="#31598a" strokeWidth="7" /><path d="M54 6l4 11M67 11l-9 6M58 17l-4 11" stroke="#6f9fd0" strokeWidth="3" /><circle cx="57.500" cy="17" r="4" fill="#c8342c" /></g>
  ),
  field: (
    <g><path d="M44 18l13-8 17 2-8 14z" fill="#4576b8" stroke="#274c80" /><path d="M48 17l20 6M53 13l18 5M60 10l-7 11M66 12l-6 12" stroke="#274c80" strokeWidth="0.900" /></g>
  ),
  projected: (
    <g><path d="M44 17l14-11 15 12-13 10z" fill="#85bb5c" stroke="#56799c" strokeWidth="1.500" /><path d="M49 13l15 11M54 10l14 11M50 22l15-10M54 25l15-9" stroke="#d8ecc4" strokeWidth="1" /></g>
  ),
}

const nodes = [
  { name: 'drawcurve1', x: 350, y: 126, art: 'pen', lock: true },
  { name: 'resample1', x: 350, y: 218, art: 'waves', note: 'activar: Curve U Attribute' },
  { name: 'attribremap1', x: 350, y: 346, art: 'remap', selected: true, lock: true, note: 'original name: curveu\nnew name: curveu\nmodificar el grafico de Curvas' },
  { name: 'polywire1', x: 350, y: 530, art: 'joint', note: 'wire radius: en el dropwdown\nmenu seleccionar Attribute\nScale attrib: curveu' },
  { name: 'heightfield1', x: 59, y: 585, art: 'field', lock: true },
  { name: 'heightfield_project1', x: 234, y: 695, art: 'projected', lock: true, display: true },
]

const dots = [
  [384, 117], [431, 117], [408, 171], [408, 208], [408, 263], [408, 337],
  [408, 391], [408, 521], [408, 576], [315, 686],
]

const greenDots = [[117, 630], [268, 686], [291, 741]]

function Node({ node }) {
  return (
    <NodeBox $x={node.x} $y={node.y}>
      <NodeTile width="116" height="35" viewBox="0 0 116 35">
        {node.selected && <rect x="-2" y="-2" width="120" height="39" rx="7" fill="none" stroke="#f2cc14" strokeWidth="3" />}
        <rect x="0.500" y="0.500" width="115" height="34" rx="5" fill="#cfcfcf" stroke={node.selected ? '#222' : '#8d8d8d'} strokeWidth="1.400" />
        {node.display && <path d="M103 1h8a5 5 0 0 1 5 5v23a5 5 0 0 1-5 5h-12z" fill="#04aef0" />}
        <path d="M17 1l-4 33M34 1l-4 33M87 1l-4 33M103 1l-4 33" stroke="#777" />
        {tileArt[node.art]}
      </NodeTile>
      <NodeText>
        {node.name}
        <Badges>
          {node.note && <Comment />}
          {node.lock && <Lock />}
        </Badges>
        {node.note && <Note>{node.note}</Note>}
      </NodeText>
    </NodeBox>
  )
}

const tabs = [
  ['/obj/geo1', 119], ['Tree View', 119], ['Material Palette', 154], ['Asset Browser', 145],
]

const menu = ['Add', 'Edit', 'Go', 'View', 'Tools', 'Layout', 'Labs', 'Help'];

const swatches = ['#c02020', '#e08010', '#e0d010', '#204890', '#70c020', '#7098d8', '#111', '#888', '#d0d0d0'];

const menuIcons = [
  ['Tools', <g><path d="M4 26L22 4" stroke="#d8d8d8" strokeWidth="3" /><path d="M20 2l6-1-2 7-3 1zM3 23l4 4-5 1z" fill="#e0e0e0" /><path d="M9 10l13 14" stroke="#cfcfcf" strokeWidth="6" strokeLinecap="round" /><path d="M3 4v5l5 4 5-4-1-6-4-2" fill="none" stroke="#cfcfcf" strokeWidth="3" /><circle cx="22" cy="23" r="1.500" fill="#555" /></g>],
  ['Tree', <g><path d="M4 2h6v6H4z" fill="#f2f2f2" /><path d="M7 8v16h9M7 12h9M7 18h9" fill="none" stroke="#aaa" strokeWidth="2" /><path d="M16 9h6v5h-6zM16 16h6v5h-6zM16 22h6v5h-6z" fill="#b8b8b8" /></g>],
  ['List', <g><path d="M2 1h22v26H2z" fill="#c4c4c4" /><path d="M2 5h22v4H2zM2 12h22v4H2zM2 20h22v5H2z" fill="#ededed" /></g>],
  ['Palette', <g><path d="M2 2h23v24H2z" fill="#f2f2f2" />{swatches.map((c, i) => <rect key={c} x={4 + (i % 3) * 7} y={4 + Math.floor(i / 3) * 7} width="5.500" height="5.500" fill={c} />)}</g>],
  ['Shapes', <g><path d="M3 3h22v23H3z" fill="#3c3c3c" stroke="#9a9a9a" strokeWidth="2" /><path d="M6 6h6v4H6zM16 7l3-2 4 2-3 3zM7 13h6l-2 4H6zM19 12l3 5h-6zM6 20l3-1 4 4H6zM16 19l7 4h-7z" fill="#b4b4b4" /></g>],
  ['Boxes', <g><path d="M2 3h23v23H2z" fill="#d6d9da" /><path d="M2 5h23" stroke="#444" strokeWidth="2" /><path d="M5 9h10v5H5zM12 18h10v5H12z" fill="#fff" stroke="#111" strokeWidth="2" /></g>],
  ['Note', <g><path d="M1 2h25v17l-8 8H1z" fill="#edd842" stroke="#a8921c" /><path d="M26 19l-8 8-1-7z" fill="#f8eea0" stroke="#a8921c" /><path d="M5 8h16M5 12h14M5 16h9" stroke="#222" strokeWidth="1.800" /></g>],
  ['Image', <g><path d="M1 2h7v24H1z" fill="#7cc0ea" stroke="#aaa" /><path d="M8 5a3 3 0 0 0 0 6z" fill="#e8d820" /><path d="M8 15a5 5 0 0 0 0 9z" fill="#58a050" /><path d="M18 10l7 4-7 4z" fill="#999" /></g>],
]

function Network() {
  return (
    <Pane>
      <HSplitter>
        <svg width="8" height="5" viewBox="0 0 8 5"><path d="M4 0l4 5H0z" fill="#8c8c8c" /></svg>
        <svg width="30" height="7" viewBox="0 0 30 7"><path d="M0 1h30M0 3.500h30M0 6h30" stroke="#777" strokeDasharray="1 2" /></svg>
        <svg width="8" height="5" viewBox="0 0 8 5"><path d="M0 0h8L4 5z" fill="#8c8c8c" /></svg>
      </HSplitter>
      <Tabs>
        {tabs.map(([name, width], i) => (
          <Tab key={name} $width={width} $on={i === 0}>{name}<button type="button" aria-label={`Close ${name}`}><Cross /></button></Tab>
        ))}
        <TabEnd>
          <Plus />
          <svg width="40" height="14" viewBox="0 0 40 14"><path d="M3 1h16v12H3z" fill="#d8dad8" /><path d="M34 3h8l-4 7z" fill="#e0e0e0" /></svg>
        </TabEnd>
      </Tabs>
      <PathRow>
        <IconButton type="button" aria-label="Back" $width={36}><Arrow /></IconButton>
        <IconButton type="button" aria-label="Forward" $width={32}><Arrow dim flip /></IconButton>
        <PathBox>
          <a href="#obj"><Clapper />obj</a>
          <svg width="14" height="32" viewBox="0 0 14 32"><path d="M2 0l8 16-8 16" fill="none" stroke="#111" strokeWidth="1.500" /></svg>
          <a href="#geo1"><GeoIcon />geo1</a>
          <Spacer />
          <IconButton type="button" aria-label="Path history" $width={18}><Down /></IconButton>
        </PathBox>
        <IconButton type="button" aria-label="Pin" $width={36}><Pin /></IconButton>
        <IconButton type="button" aria-label="Link" $width={38}><Target /></IconButton>
      </PathRow>
      <MenuBar>
        <MenuGrip><svg width="12" height="10" viewBox="0 0 12 10"><path d="M6 0l5 10H1z" /></svg></MenuGrip>
        <Menu>{menu.map(item => <button key={item} type="button">{item}</button>)}</Menu>
        <MenuIcons>
          {menuIcons.map(([name, art]) => (
            <button key={name} type="button" aria-label={name}><svg width="28" height="28" viewBox="0 0 28 28">{art}</svg></button>
          ))}
        </MenuIcons>
      </MenuBar>
      <Canvas>
        <Watermark>Geometry</Watermark>
        <Wires width="806" height="762" viewBox="0 0 806 762" fill="none">
          <circle cx="291" cy="713" r="58" fill="#4469a3" />
          <circle cx="291" cy="713" r="39" fill="#9474cc" />
          <path d="M408 171V208" stroke="#5b76a8" strokeWidth="1.500" />
          <path d="M408 263V337M408 391V521" stroke="#85865a" strokeWidth="1.500" />
          <path d="M408 576Q408 590 393 604L333 654Q318 668 315 686" stroke="#6482c4" />
          <path d="M117 630Q119 658 146 658H240Q264 658 268 686" stroke="#2aa082" />
          {dots.map(([x, y]) => <circle key={`${x}-${y}`} cx={x} cy={y} r="5.500" fill="#b6b6b6" />)}
          {greenDots.map(([x, y]) => <circle key={x} cx={x} cy={y} r="5.500" fill="#26ac8c" />)}
        </Wires>
        {nodes.map(node => <Node key={node.name} node={node} />)}
      </Canvas>
    </Pane>
  )
}

export default function App() {
  return (
    <>
      <GlobalStyle />
      <Desktop>
        <SceneView />
        <VSplitter>
          <svg width="8" height="140" viewBox="0 0 8 140"><path d="M6 4l-5 5 5 5zM1 94l5 5-5 5z" fill="#8c8c8c" /><path d="M2 42v30M5 42v30" stroke="#777" strokeDasharray="1 2" /></svg>
        </VSplitter>
        <Pane>
          <Strip $left={82}>
            <StripBox>
              <svg width="160" height="9" viewBox="0 0 160 9"><path d="M0 0h24v7H0z" fill="#4a5254" stroke="#888" /><path d="M62 9l4-9" stroke="#111" /><ellipse cx="93" cy="0" rx="8" ry="5" fill="#f2dc3a" /></svg>
            </StripBox>
            <svg width="70" height="10" viewBox="0 0 70 10"><path d="M26 0h4v4h-4z" fill="#777" /><circle cx="66" cy="-4" r="12" fill="none" stroke="#6482b4" strokeWidth="2" /></svg>
          </Strip>
          <Split>
            <Parameters />
            <Network />
          </Split>
        </Pane>
      </Desktop>
    </>
  )
}
